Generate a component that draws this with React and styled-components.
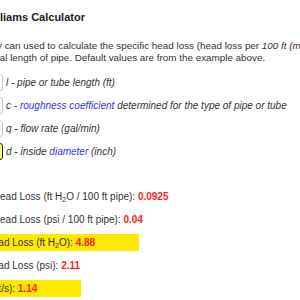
import React from 'react';
import styled, { createGlobalStyle } from 'styled-components';

const Global = createGlobalStyle`
  html, body { margin: 0; padding: 0; background: #fff; overflow: hidden; }
  body { font-family: "Liberation Sans", Arial, sans-serif; color: #333; }
`;

const Page = styled.main`
  margin-left: -45px;
  padding-top: 10px;
  width: 700px;
`;

const Title = styled.h2`
  margin: 0 0 0 -7.5px;
  font-size: 11px;
  line-height: 14px;
  font-weight: bold;
  color: #222;
`;

const Intro = styled.p`
  margin: 16px 0 0;
  padding-left: 7px;
  font-size: 9.85px;
  line-height: 12px;
  white-space: nowrap;
`;

const Fields = styled.div`
  margin-top: 9.5px;
  display: flex;
  flex-direction: column;
  gap: 6px;
`;

const Field = styled.label`
  display: flex;
  align-items: center;
  gap: 3px;
  height: 17px;
  font-size: 10px;
  font-style: italic;
  color: #333;
`;

const NumInput = styled.input`
  box-sizing: border-box;
  width: 48px;
  height: 17px;
  margin: 0;
  padding: 0 3px;
  border: 1px solid ${(p) => (p.$active ? '#222' : '#c8c8c8')};
  border-radius: 3px;
  background: ${(p) => (p.$active ? '#ffff8a' : '#fff')};
  font-size: 10px;
  font-family: inherit;
  color: #333;
  outline: none;
`;

const Link = styled.a`
  color: #3434e6;
  text-decoration: none;
`;

const Results = styled.div`
  margin-top: 28px;
  display: flex;
  flex-direction: column;
  gap: 6px;
`;

const Result = styled.div`
  font-size: 10px;
  line-height: 11px;
`;

const Highlight = styled.span`
  display: inline-block;
  padding: 3px 44px 3px 0;
  background: ${(p) => (p.$hl ? '#ffe900' : 'transparent')};
`;

const Value = styled.strong`
  color: #ff2020;
  font-weight: bold;
`;

const Sub = styled.sub`
  font-size: 7px;
  line-height: 0;
  vertical-align: -2px;
`;

const fields = [
  { id: 'l', value: '100', label: <>l - pipe or tube length (ft)</> },
  {
    id: 'c',
    value: '140',
    label: (
      <>
        c - <Link href="#c">roughness coefficient</Link> determined for the type of pipe or tube
      </>
    ),
  },
  { id: 'q', value: '10', label: <>q - flow rate (gal/min)</> },
  {
    id: 'd',
    value: '2',
    active: true,
    label: (
      <>
        d - inside <Link href="#d">diameter</Link> (inch)
      </>
    ),
  },
];

const H2O = () => (
  <>
    H<Sub>2</Sub>O
  </>
);

const results = [
  { label: <>Specific Head Loss (ft <H2O /> / 100 ft pipe): </>, value: '0.0925' },
  { label: <>Specific Head Loss (psi / 100 ft pipe): </>, value: '0.04' },
  { label: <>Actual Head Loss (ft <H2O />): </>, value: '4.88', hl: true },
  { label: <>Actual Head Loss (psi): </>, value: '2.11' },
  { label: <>Velocity (ft/s): </>, value: '1.14', hl: true },
];

export default function App() {
  return (
    <>
      <Global />
      <Page>
        <Title>Hazen-Williams Calculator</Title>
        <Intro>
          One may can used to calculate the specific head loss (head loss per <i>100 ft (m)</i> pipe) and the total head loss
          <br />
          and actual length of pipe. Default values are from the example above.
        </Intro>
        <Fields>
          {fields.map((f) => (
            <Field key={f.id}>
              <NumInput $active={f.active} defaultValue={f.value} aria-label={f.id} />
              <span>{f.label}</span>
            </Field>
          ))}
        </Fields>
        <Results>
          {results.map((r, i) => (
            <Result key={i}>
              <Highlight $hl={r.hl}>
                {r.label}
                <Value>{r.value}</Value>
              </Highlight>
            </Result>
          ))}
        </Results>
      </Page>
    </>
  );
}
